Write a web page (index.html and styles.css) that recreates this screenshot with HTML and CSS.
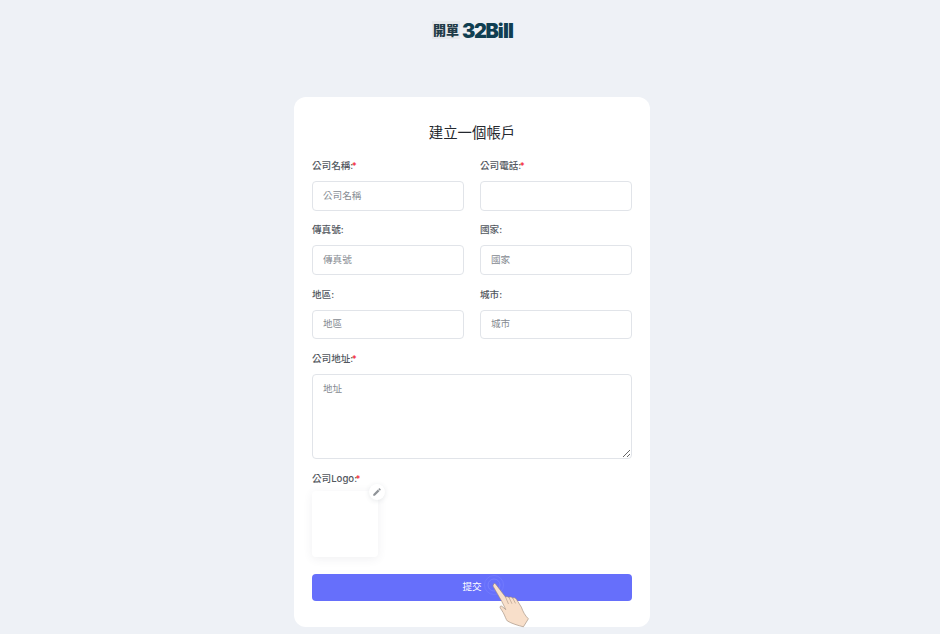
FILE: index.html
```html
<!DOCTYPE html>
<html lang="zh-Hant">
<head>
<meta charset="utf-8">
<title>建立一個帳戶</title>
<link rel="stylesheet" href="styles.css">
</head>
<body>
<header class="brand">
  <span class="brand-tag">開單</span>
  <span class="brand-num">32</span><span class="brand-name">Bill</span>
</header>
<main class="card">
  <h1 class="title">建立一個帳戶</h1>
  <form class="form">
    <div class="grid">
      <div class="field"><label class="label">公司名稱:<span class="req">*</span></label><input class="input" placeholder="公司名稱"></div>
      <div class="field"><label class="label">公司電話:<span class="req">*</span></label><input class="input"></div>
      <div class="field"><label class="label">傳真號:</label><input class="input" placeholder="傳真號"></div>
      <div class="field"><label class="label">國家:</label><input class="input" placeholder="國家"></div>
      <div class="field"><label class="label">地區:</label><input class="input" placeholder="地區"></div>
      <div class="field"><label class="label">城市:</label><input class="input" placeholder="城市"></div>
      <div class="field wide"><label class="label">公司地址:<span class="req">*</span></label><textarea class="input area" placeholder="地址"></textarea></div>
    </div>
    <div class="logo-field">
      <label class="label logo-label">公司Logo:<span class="req">*</span></label>
      <div class="logo-box">
        <span class="edit">
          <svg width="10" height="10" viewBox="0 0 24 24"><path fill="#8f9398" d="M3 17.25V21h3.75L17.81 9.94l-3.75-3.75L3 17.25zM20.71 7.04a1 1 0 0 0 0-1.41l-2.34-2.34a1 1 0 0 0-1.41 0l-1.83 1.83 3.75 3.75 1.83-1.83z"/></svg>
        </span>
      </div>
    </div>
    <div class="submit-wrap">
      <button type="button" class="submit">提交</button>
      <svg class="hand" width="56" height="64" viewBox="0 0 56 64">
        <g fill="none" stroke="#7f87ff" stroke-width="0.7"><circle cx="14" cy="15" r="6"/><circle cx="14" cy="15" r="9.500" opacity="0.6"/></g>
        <path fill="#f8dfca" stroke="#9a8676" stroke-width="0.6" stroke-linejoin="round" d="M13.500 14c.8-1 1.800-.6 2.400.4l9.600 12.600c1.200-.6 2.600-.4 3.400.4 1.300-.8 2.900-.4 3.700.6 1.600-.7 3 0 3.800 1.200l5 8c1.400 4 3.700 8.600 7 11.600l-5 8c-5.200-1.200-12-3.400-16-5.800-1.400-1.200-2.400-5.200-4.200-8.400l-3-4.800c-.6-1.200.4-2.200 1.600-1.600l4 3.400-3.800-7.800-8.800-15.400c-.3-.6-.2-1.400.3-1.400z"/>
        <path fill="none" stroke="#9a8676" stroke-width="0.5" d="M25.500 27l3 7M29 27.400l3 6.400M32.700 28l2.800 5.400"/>
      </svg>
    </div>
  </form>
</main>
</body>
</html>
```
FILE: styles.css
```css
* { box-sizing: border-box; }
html, body { height: 100%; }
body {
  margin: 0;
  height: 634px;
  overflow: hidden;
  background: #eef1f6;
  padding-left: 4px;
  font-family: "Inter", "Noto Sans CJK TC", sans-serif;
  color: #3f444b;
  display: flex;
  flex-direction: column;
  align-items: center;
}
.brand {
  height: 97px;
  padding: 20px 0 0 1px;
  display: flex;
  align-items: flex-start;
  line-height: 22px;
  color: #103f52;
}
.brand-tag {
  background: #e6e8eb;
  font: 900 13px/18px "Noto Sans CJK TC", sans-serif;
  color: #1f3b47;
  margin: 1px 2px 0 0;
  padding: 0 1px;
}
.brand-num { font: 900 20px/22px "Inter", sans-serif; letter-spacing: -1.5px; }
.brand-name { font: 900 20px/22px "Inter", sans-serif; letter-spacing: -0.9px; }
.card {
  width: 356px;
  height: 530px;
  background: #fff;
  border-radius: 12px;
  padding: 24px 18px 0;
}
.title {
  margin: 0;
  text-align: center;
  font: 400 14.4px/21px "Noto Sans CJK TC", sans-serif;
  color: #24282e;
}
.grid {
  display: grid;
  grid-template-columns: 152px 152px;
  column-gap: 16px;
  row-gap: 10.8px;
  margin-top: 15px;
}
.wide { grid-column: 1 / -1; }
.field, .logo-field { display: flex; flex-direction: column; }
.label {
  font: 500 9.6px/17px "Inter", "Noto Sans CJK TC", sans-serif;
  color: #52575e;
  margin-bottom: 7px;
}
.req { color: #f5222d; margin-left: -1.5px; }
.input {
  display: block;
  width: 100%;
  height: 29.5px;
  padding: 0 10px 2px;
  border: 1px solid #e1e4e9;
  border-radius: 4px;
  background: #fff;
  font: 400 9.6px/14px "Noto Sans CJK TC", sans-serif;
  color: #333;
  outline: none;
}
.input::placeholder { color: #858a91; opacity: 1; }
.area { height: 85px; padding: 6px 10px 0; resize: vertical; width: 320px; }
.logo-field { margin-top: 11.1px; }
.logo-label { margin-bottom: 4px; }
.logo-box {
  position: relative;
  width: 66px;
  height: 66px;
  background: #fff;
  border-radius: 4px;
  box-shadow: 0 2px 10px rgba(60, 70, 90, 0.08);
}
.edit {
  position: absolute;
  top: -7px;
  right: -7px;
  width: 16px;
  height: 16px;
  border-radius: 50%;
  background: #fff;
  box-shadow: 0 1px 5px rgba(60, 70, 90, 0.12);
  display: flex;
  align-items: center;
  justify-content: center;
}
.submit-wrap { position: relative; margin-top: 17px; }
.submit {
  display: block;
  width: 320px;
  height: 27px;
  border: 0;
  border-radius: 4px;
  background: #666ffb;
  color: #fff;
  font: 400 9.6px/14px "Noto Sans CJK TC", sans-serif;
  padding: 0 0 2px;
}
.hand { position: absolute; left: 168px; top: -4px; }
```
